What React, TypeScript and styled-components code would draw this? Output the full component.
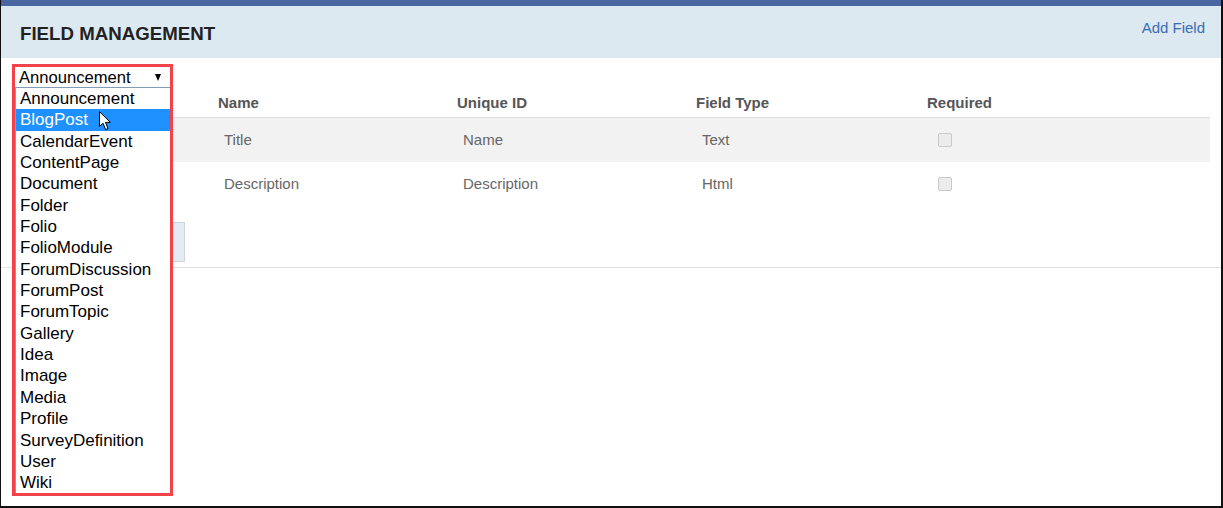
import styled, { createGlobalStyle } from "styled-components"

const Global = createGlobalStyle`
    html, body {
        margin: 0;
        padding: 0;
        background: #fff;
        font-family: "Liberation Sans", Arial, sans-serif;
    }
`

const Frame = styled.div`
    width: 1223px;
    height: 508px;
    box-sizing: border-box;
    border-left: 1px solid #111;
    border-right: 2px solid #111;
    border-bottom: 2px solid #111;
    background: #fff;
    overflow: hidden;
`
const TopBar = styled.div`
    height: 6px;
    background: #4a66a1;
`
const Header = styled.header`
    height: 52px;
    background: #dce9f1;
    display: flex;
    justify-content: space-between;
    padding: 0 16px 0 19px;
`
const Title = styled.h1`
    margin: 3px 0 0 0;
    align-self: center;
    font-size: 18.7px;
    font-weight: bold;
    color: #222;
`
const AddLink = styled.a`
    margin-top: 13px;
    align-self: flex-start;
    font-size: 15px;
    line-height: 17px;
    color: #3b6cb4;
    text-decoration: none;
    cursor: pointer;
`
const Content = styled.section`
    padding: 9px 11px 0 14px;
`
const SelectWrap = styled.div`
    position: relative;
    width: 155px;
    height: 20px;
    z-index: 5;
`
const SelectBox = styled.div`
    height: 20px;
    display: flex;
    align-items: center;
    justify-content: space-between;
    padding: 1px 9px 0 4px;
    box-sizing: border-box;
    font-size: 16.6px;
    color: #000;
    background: #fff;
`
const Arrow = styled.span`
    width: 0;
    height: 0;
    border-left: 3.5px solid transparent;
    border-right: 3.5px solid transparent;
    border-top: 7px solid #000;
`
const List = styled.ul`
    position: absolute;
    top: 20px;
    left: 0;
    width: 155px;
    margin: 0;
    padding: 0;
    list-style: none;
    background: #fff;
    border-top: 1px solid #7f9db9;
    border-left: 1px solid #7f9db9;
    box-sizing: border-box;
`
const Item = styled.li<{ $ativo?: boolean }>`
    height: 21.35px;
    line-height: 21.35px;
    padding-left: 4px;
    font-size: 17px;
    color: ${({ $ativo }) => ($ativo ? "#fff" : "#000")};
    background: ${({ $ativo }) => ($ativo ? "#1e90ff" : "transparent")};
    white-space: nowrap;
`
const RedBox = styled.div`
    position: absolute;
    left: -3px;
    top: -3px;
    width: 161px;
    height: 432px;
    box-sizing: border-box;
    border: 3px solid #f0434a;
    pointer-events: none;
`
const Cursor = styled.svg`
    position: absolute;
    left: 84px;
    top: 44px;
`
const Table = styled.table`
    margin: 2px 0 0 5px;
    width: 1190px;
    border-collapse: collapse;
    table-layout: fixed;
`
const Th = styled.th<{ $w?: number }>`
    box-sizing: border-box;
    width: ${({ $w }) => ($w ? `${$w}px` : "auto")};
    height: 28px;
    padding: 0 8px;
    text-align: left;
    font-size: 15px;
    font-weight: bold;
    color: #555;
    border-bottom: 1px solid #ddd;
`
const Tr = styled.tr<{ $zebra?: boolean }>`
    background: ${({ $zebra }) => ($zebra ? "#f2f2f2" : "#fff")};
`
const Td = styled.td`
    height: 44px;
    padding: 0 14px;
    font-size: 15px;
    color: #666;
`
const Check = styled.span`
    display: inline-block;
    width: 12px;
    height: 12px;
    margin: -3px 0 0 5px;
    border: 1px solid #c9c9c9;
    border-radius: 2px;
    background: #ececec;
    vertical-align: middle;
`
const Botao = styled.button`
    margin: 16px 0 0 5px;
    width: 165px;
    height: 40px;
    background: #e4ebf3;
    border: 1px solid #cfd4da;
`
const Divisor = styled.hr`
    margin: 3px 0 0 0;
    border: none;
    border-top: 1px solid #e3e3e3;
`

const tipos = [
    "Announcement", "BlogPost", "CalendarEvent", "ContentPage", "Document", "Folder",
    "Folio", "FolioModule", "ForumDiscussion", "ForumPost", "ForumTopic", "Gallery",
    "Idea", "Image", "Media", "Profile", "SurveyDefinition", "User", "Wiki",
]

const campos = [
    { nome: "Title", id: "Name", tipo: "Text" },
    { nome: "Description", id: "Description", tipo: "Html" },
]

const App = () => {
    return (
        <>
            <Global />
            <Frame>
                <TopBar />
                <Header>
                    <Title>FIELD MANAGEMENT</Title>
                    <AddLink>Add Field</AddLink>
                </Header>
                <Content>
                    <SelectWrap>
                        <SelectBox>
                            <span>Announcement</span>
                            <Arrow />
                        </SelectBox>
                        <List>
                            {tipos.map(t => <Item key={t} $ativo={t === "BlogPost"}>{t}</Item>)}
                        </List>
                        <RedBox />
                        <Cursor width="13" height="20" viewBox="0 0 13 20">
                            <path d="M0.5 0.5 L0.5 15.5 L4 12.2 L6.6 18.6 L9 17.6 L6.5 11.4 L11.3 11.4 Z"
                                fill="#fff" stroke="#000" strokeWidth="1" strokeLinejoin="round" />
                        </Cursor>
                    </SelectWrap>

                    <Table>
                        <thead>
                            <tr>
                                <Th $w={190}></Th>
                                <Th $w={239}>Name</Th>
                                <Th $w={239}>Unique ID</Th>
                                <Th $w={231}>Field Type</Th>
                                <Th>Required</Th>
                            </tr>
                        </thead>
                        <tbody>
                            {campos.map((c, i) => (
                                <Tr key={c.nome} $zebra={i % 2 === 0}>
                                    <Td></Td>
                                    <Td>{c.nome}</Td>
                                    <Td>{c.id}</Td>
                                    <Td>{c.tipo}</Td>
                                    <Td><Check /></Td>
                                </Tr>
                            ))}
                        </tbody>
                    </Table>

                    <Botao aria-label="Save" />
                </Content>
                <Divisor />
            </Frame>
        </>
    )
}

export default App
